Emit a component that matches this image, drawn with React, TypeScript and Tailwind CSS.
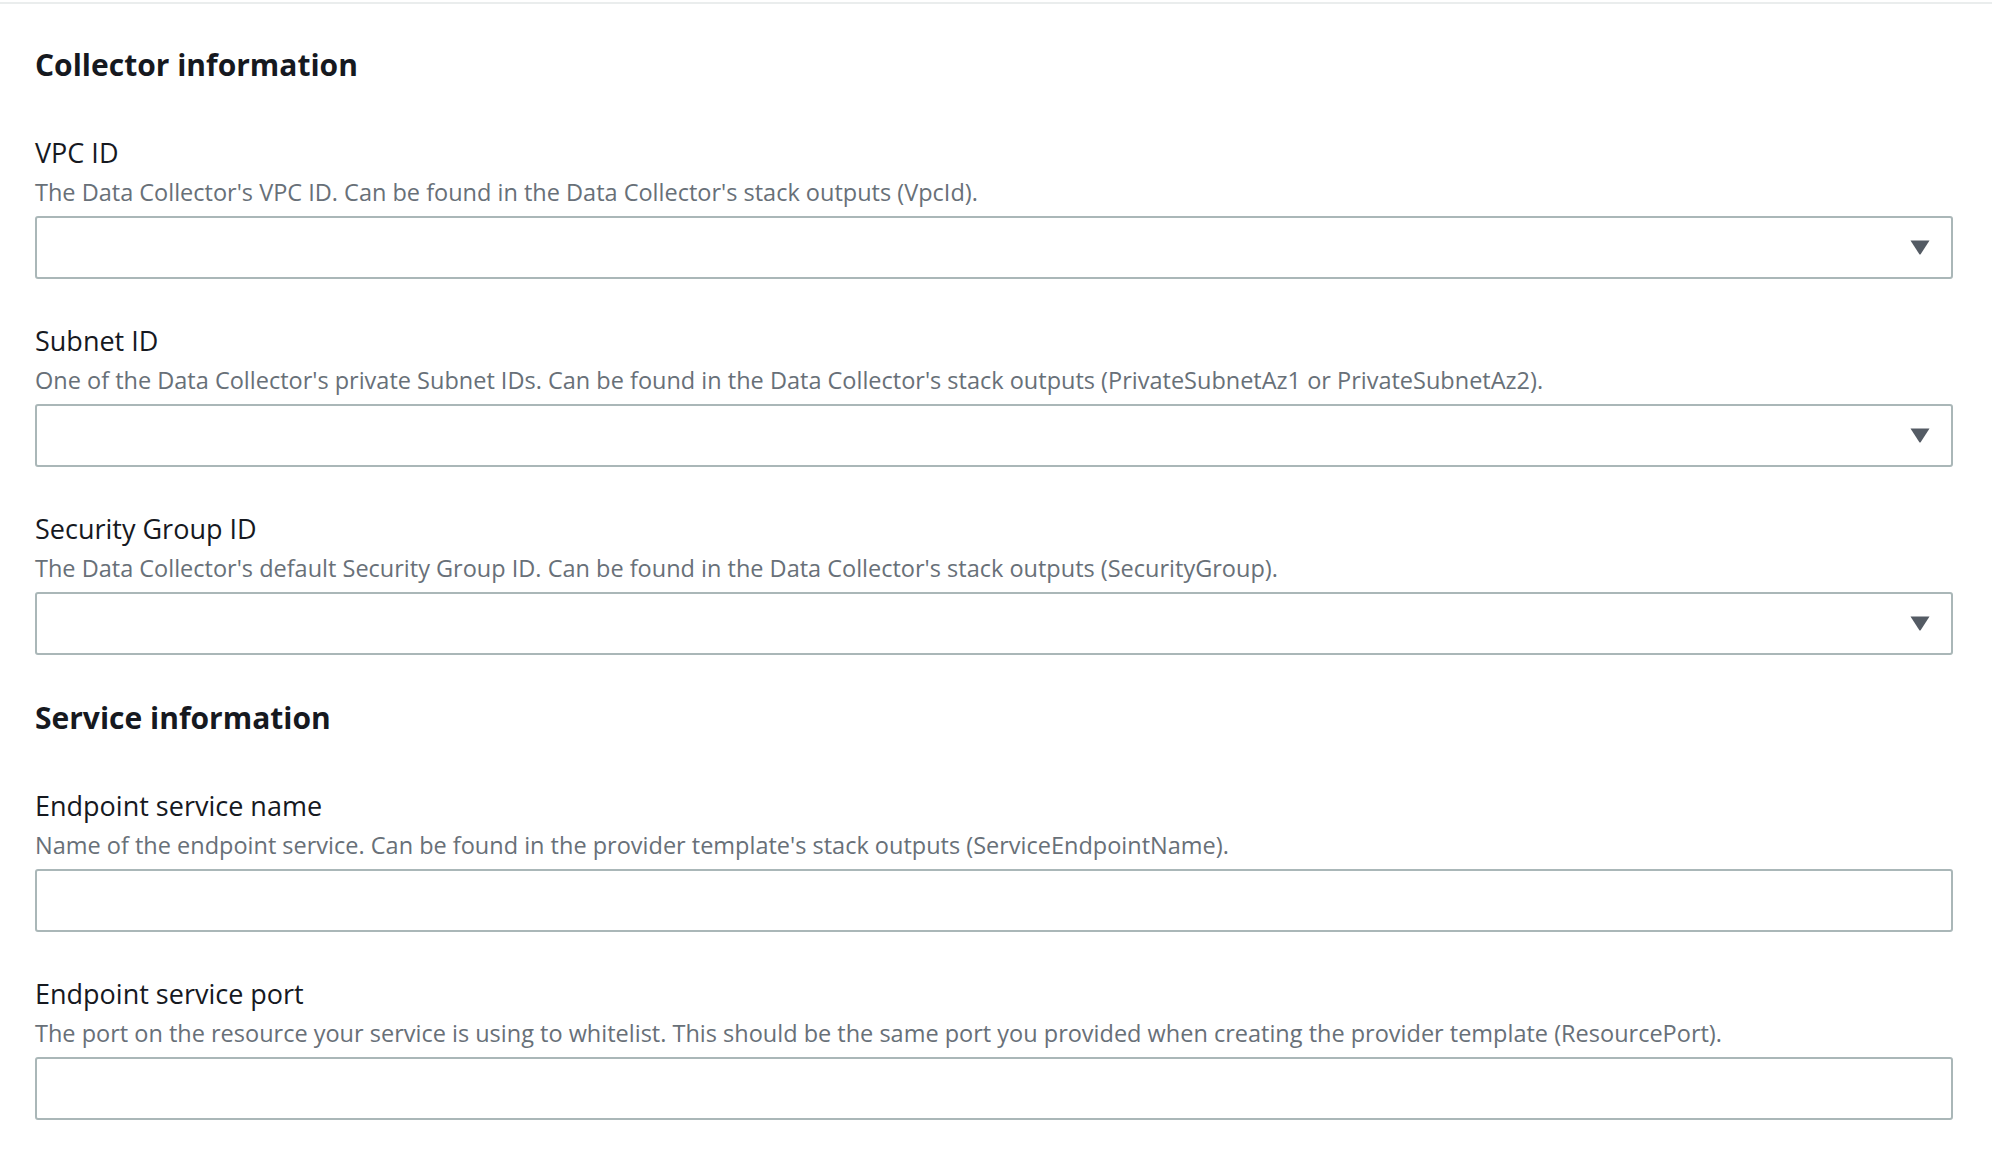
import React from 'react';

interface FieldProps {
  label: string;
  description: string;
  select?: boolean;
}

const FONT = "font-['Open_Sans','Noto_Sans',sans-serif]";

function Field({ label, description, select }: FieldProps) {
  return (
    <div className="flex flex-col">
      <label className="text-[27px] leading-[32px] text-[#16191f]">{label}</label>
      <p className="mt-[9px] text-[23.5px] leading-[28px] text-[#687078]">{description}</p>
      <div className="mt-[10px] h-[63px] rounded-[3px] border-2 border-[#aab7b8] bg-white flex items-center justify-end pr-[21px]">
        {select && (
          <svg width="20" height="15" viewBox="0 0 20 15" aria-hidden="true">
            <path d="M0.5 0.5 H19.5 L10.8 14 Q10 15 9.2 14 Z" fill="#545b64" />
          </svg>
        )}
      </div>
    </div>
  );
}

export default function App() {
  return (
    <div className={`${FONT} min-h-[1160px] bg-white`}>
      <div className="pt-[2px]">
        <div className="border-t-2 border-[#eaeded]" />
      </div>

      <div className="pl-[35px] pr-[39px]">
        {/* Collector information */}
        <h2 className="mt-[41px] text-[30px] leading-[40px] font-bold text-[#16191f]">
          Collector information
        </h2>
        <div className="mt-[52px] flex flex-col gap-[46px]">
          <Field
            select
            label="VPC ID"
            description="The Data Collector's VPC ID. Can be found in the Data Collector's stack outputs (VpcId)."
          />
          <Field
            select
            label="Subnet ID"
            description="One of the Data Collector's private Subnet IDs. Can be found in the Data Collector's stack outputs (PrivateSubnetAz1 or PrivateSubnetAz2)."
          />
          <Field
            select
            label="Security Group ID"
            description="The Data Collector's default Security Group ID. Can be found in the Data Collector's stack outputs (SecurityGroup)."
          />
        </div>

        {/* Service information */}
        <h2 className="mt-[43px] text-[30px] leading-[40px] font-bold text-[#16191f]">
          Service information
        </h2>
        <div className="mt-[52px] flex flex-col gap-[46px]">
          <Field
            label="Endpoint service name"
            description="Name of the endpoint service. Can be found in the provider template's stack outputs (ServiceEndpointName)."
          />
          <Field
            label="Endpoint service port"
            description="The port on the resource your service is using to whitelist. This should be the same port you provided when creating the provider template (ResourcePort)."
          />
        </div>
      </div>
    </div>
  );
}
